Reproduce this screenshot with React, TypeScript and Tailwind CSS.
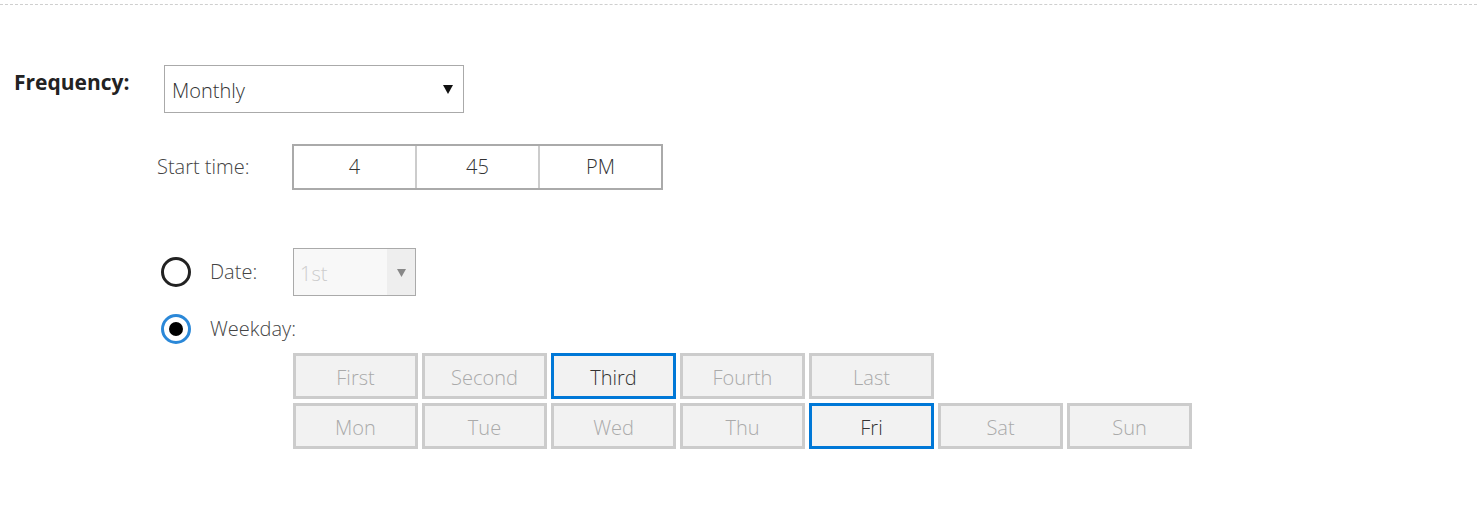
import React, { useState } from 'react';

const ordinals = ['First', 'Second', 'Third', 'Fourth', 'Last'];
const days = ['Mon', 'Tue', 'Wed', 'Thu', 'Fri', 'Sat', 'Sun'];

const Cell: React.FC<{ label: string; active: boolean; onClick: () => void }> = ({ label, active, onClick }) => (
  <button
    onClick={onClick}
    className={`w-[125px] h-[46px] pt-[3px] flex items-center justify-center bg-[#f2f2f2] border-[3px] text-[20px] font-light ${
      active ? 'border-[#0078d7] text-[#333]' : 'border-[#cccccc] text-[#aaa]'
    }`}
  >
    {label}
  </button>
);

const Radio: React.FC<{ checked: boolean }> = ({ checked }) =>
  checked ? (
    <span className="w-[30px] h-[30px] rounded-full border-[3px] border-[#2b88d8] flex items-center justify-center">
      <span className="w-[14px] h-[14px] rounded-full bg-black" />
    </span>
  ) : (
    <span className="w-[30px] h-[30px] rounded-full border-[3px] border-[#222]" />
  );

export default function App() {
  const [ordinal, setOrdinal] = useState('Third');
  const [day, setDay] = useState('Fri');
  const [mode, setMode] = useState<'date' | 'weekday'>('weekday');

  return (
    <div className="w-[1477px] h-[532px] bg-white text-[#333] font-['Open_Sans',sans-serif]">
      <div className="pt-[4px]">
        <div className="border-t border-dashed border-[#cfcfcf]" />
      </div>

      <div className="flex items-start pt-[60px]">
        <div className="w-[164px] pl-[14px] pt-[2px] text-[21px] font-bold text-[#222]">Frequency:</div>
        <div className="w-[300px] h-[48px] border border-[#aaa] flex items-center justify-between pl-[7px] pr-[10px]">
          <span className="text-[20px] font-light text-[#333] pt-[3px]">Monthly</span>
          <svg width="10" height="10" viewBox="0 0 10 10">
            <path d="M0 1h10L5 10z" fill="#111" />
          </svg>
        </div>
      </div>

      <div className="pl-[157px]">
        <div className="flex items-center pt-[31px] font-light">
          <div className="w-[135px] text-[20px] text-[#444]">Start time:</div>
          <div className="w-[371px] h-[46px] border-2 border-[#aaa] flex">
            <div className="flex-1 flex items-center justify-center text-[20px] border-r-2 border-[#ccc]">4</div>
            <div className="flex-1 flex items-center justify-center text-[20px] border-r-2 border-[#ccc]">45</div>
            <div className="flex-1 flex items-center justify-center text-[20px]">PM</div>
          </div>
        </div>

        <div className="flex items-center mt-[58px] cursor-pointer font-light" onClick={() => setMode('date')}>
          <div className="w-[136px] flex items-center gap-[19px] pl-[4px]">
            <Radio checked={mode === 'date'} />
            <span className="text-[20px] text-[#444]">Date:</span>
          </div>
          <div className="w-[123px] h-[48px] border border-[#aaa] bg-[#f8f8f8] flex">
            <span className="flex-1 flex items-center pl-[6px] pt-[3px] text-[20px] text-[#ccc]">1st</span>
            <span className="w-[28px] bg-[#eeeeee] flex items-center justify-center">
              <svg width="9" height="9" viewBox="0 0 10 10">
                <path d="M0 1h10L5 10z" fill="#888" />
              </svg>
            </span>
          </div>
        </div>

        <div className="flex items-center mt-[18px] gap-[19px] pl-[4px] cursor-pointer font-light" onClick={() => setMode('weekday')}>
          <Radio checked={mode === 'weekday'} />
          <span className="text-[20px] text-[#444]">Weekday:</span>
        </div>

        <div className="pl-[136px] mt-[9px] flex flex-col gap-[4px]">
          <div className="flex gap-[4px]">
            {ordinals.map((o) => (
              <Cell key={o} label={o} active={ordinal === o} onClick={() => setOrdinal(o)} />
            ))}
          </div>
          <div className="flex gap-[4px]">
            {days.map((d) => (
              <Cell key={d} label={d} active={day === d} onClick={() => setDay(d)} />
            ))}
          </div>
        </div>
      </div>
    </div>
  );
}
